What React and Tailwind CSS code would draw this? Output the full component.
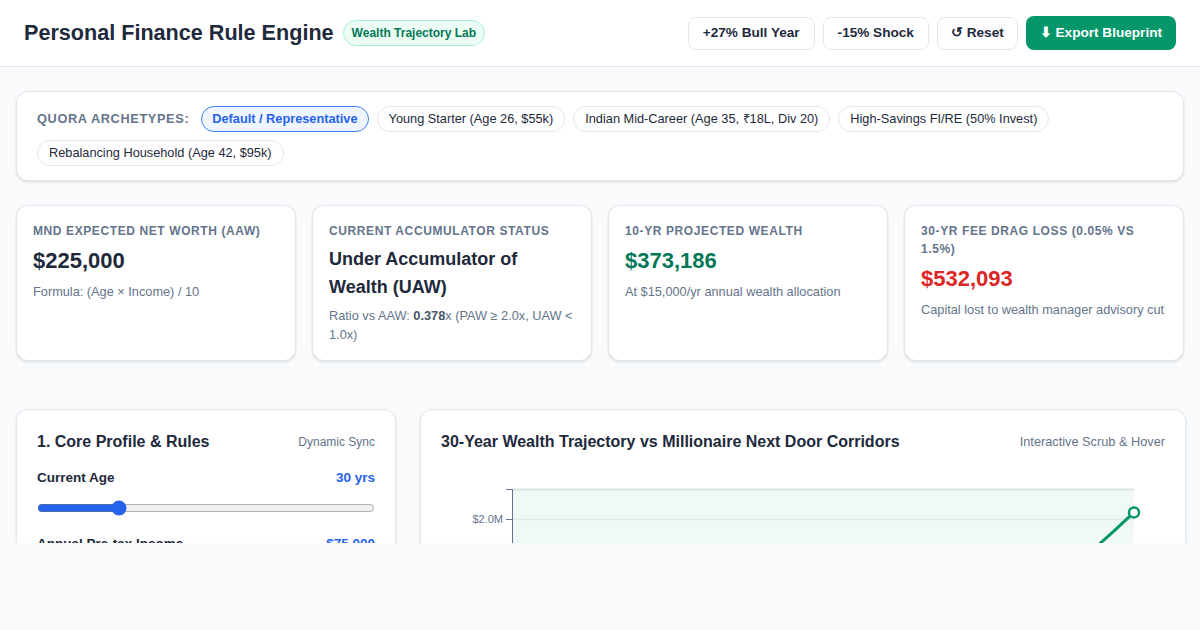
import React, { useState } from 'react';

const archetypes = [
  'Default / Representative',
  'Young Starter (Age 26, $55k)',
  'Indian Mid-Career (Age 35, ₹18L, Div 20)',
  'High-Savings FI/RE (50% Invest)',
  'Rebalancing Household (Age 42, $95k)',
];

function StatCard({ label, children, note }) {
  return (
    <div className="bg-white border border-[#e2e8f0] rounded-xl shadow-sm px-4 pt-4 pb-4">
      <div className="text-[12px] leading-[18px] font-bold uppercase tracking-wider text-[#64748b]">{label}</div>
      {children}
      <div className="mt-[5px] text-[12.75px] leading-[19px] text-[#64748b]">{note}</div>
    </div>
  );
}

function Chart() {
  // 30 yrs of growth, only the top corner is in view
  const x0 = 72, x1 = 693, base = 380, perM = 165;
  const pts = [];
  for (let t = 0; t <= 30; t++) {
    const g = (Math.pow(1.045, t) - 1) / (Math.pow(1.045, 30) - 1);
    const v = 0.05 + g * 1.99;
    pts.push([x0 + (t / 30) * (x1 - x0), base - v * perM]);
  }
  const d = pts.map((p, i) => `${i ? 'L' : 'M'}${p[0].toFixed(1)},${p[1].toFixed(1)}`).join(' ');
  const last = pts[pts.length - 1];
  return (
    <svg width="724" height="380" className="block">
      <rect x="72" y="20" width="621" height="360" fill="#f0f9f5" />
      <line x1="72" y1="20.5" x2="693" y2="20.5" stroke="#dbe3e2" strokeWidth="2" />
      <line x1="72" y1="50.5" x2="693" y2="50.5" stroke="#e2e8f0" strokeWidth="1.5" />
      <line x1="71.5" y1="20" x2="71.5" y2="380" stroke="#64748b" strokeWidth="1" />
      <line x1="65" y1="20.5" x2="71" y2="20.5" stroke="#64748b" strokeWidth="1" />
      <line x1="65" y1="50.5" x2="71" y2="50.5" stroke="#64748b" strokeWidth="1" />
      <text x="62" y="54" textAnchor="end" fontSize="11" fill="#64748b" fontFamily="'Liberation Sans', Arial, sans-serif">$2.0M</text>
      <path d={d} fill="none" stroke="#059669" strokeWidth="3" strokeLinejoin="round" />
      <circle cx={last[0]} cy={last[1]} r="5" fill="#fff" stroke="#059669" strokeWidth="2.5" />
    </svg>
  );
}

export default function App() {
  const [active, setActive] = useState(0);
  const [age, setAge] = useState(30);

  return (
    <div className="h-[630px] bg-[#f8fafc]" style={{ fontFamily: "'Liberation Sans', Arial, sans-serif" }}>
      <div className="h-[543px] overflow-hidden">
        <header className="h-[67px] bg-white border-b border-[#e2e8f0] px-6 flex items-center justify-between">
          <div className="flex items-center gap-[9px]">
            <h1 className="text-[21.6px] font-bold text-[#1e293b]">Personal Finance Rule Engine</h1>
            <span className="px-2 py-1 text-[12px] leading-4 font-bold text-[#047857] bg-[#ecfdf5] border border-[#a7f3d0] rounded-full">
              Wealth Trajectory Lab
            </span>
          </div>
          <div className="flex items-center gap-2">
            <button className="h-[33px] px-[14px] text-[13.6px] font-bold text-[#1e293b] bg-white border border-[#e2e8f0] rounded-lg">+27% Bull Year</button>
            <button className="h-[33px] px-[14px] text-[13.6px] font-bold text-[#1e293b] bg-white border border-[#e2e8f0] rounded-lg">-15% Shock</button>
            <button className="h-[33px] px-[13px] text-[13.6px] font-bold text-[#1e293b] bg-white border border-[#e2e8f0] rounded-lg">↺ Reset</button>
            <button className="h-[34px] px-[14px] text-[13.6px] font-bold text-white bg-[#059669] rounded-lg">⬇ Export Blueprint</button>
          </div>
        </header>

        <main className="px-4 pt-6">
          <div className="bg-white border border-[#e2e8f0] rounded-xl shadow-sm px-5 py-[14px] flex flex-wrap items-center gap-2">
            <span className="mr-1 text-[12.75px] font-bold uppercase tracking-wider text-[#64748b]">Quora Archetypes:</span>
            {archetypes.map((a, i) => (
              <button
                key={a}
                onClick={() => setActive(i)}
                className={
                  i === active
                    ? 'px-[10px] py-1 text-[12.75px] leading-4 font-bold text-[#2563eb] bg-[#eff6ff] border border-[#3b82f6] rounded-full'
                    : 'px-[11px] py-1 text-[12.75px] leading-4 text-[#1e293b] bg-white border border-[#e2e8f0] rounded-full'
                }
              >
                {a}
              </button>
            ))}
          </div>

          <div className="mt-6 grid grid-cols-4 gap-4">
            <StatCard label="MND Expected Net Worth (AAW)" note="Formula: (Age × Income) / 10">
              <div className="mt-[5px] text-[22px] leading-8 font-bold text-[#1e293b]">$225,000</div>
            </StatCard>
            <StatCard
              label="Current Accumulator Status"
              note={<>Ratio vs AAW: <b className="text-[#475569]">0.378</b>x (PAW ≥ 2.0x, UAW &lt; 1.0x)</>}
            >
              <div className="mt-[5px] text-lg leading-7 font-bold text-[#1e293b]">Under Accumulator of Wealth (UAW)</div>
            </StatCard>
            <StatCard label="10-Yr Projected Wealth" note="At $15,000/yr annual wealth allocation">
              <div className="mt-[5px] text-[22px] leading-8 font-bold text-[#047857]">$373,186</div>
            </StatCard>
            <StatCard label="30-Yr Fee Drag Loss (0.05% vs 1.5%)" note="Capital lost to wealth manager advisory cut">
              <div className="mt-[5px] text-[22px] leading-8 font-bold text-[#dc2626]">$532,093</div>
            </StatCard>
          </div>

          <div className="mt-12 grid grid-cols-[380px_1fr] gap-6">
            <div className="bg-white border border-[#e2e8f0] rounded-xl shadow-sm p-5">
              <div className="flex items-center justify-between">
                <h2 className="text-base leading-6 font-bold text-[#1e293b]">1. Core Profile &amp; Rules</h2>
                <span className="text-[12px] text-[#64748b]">Dynamic Sync</span>
              </div>
              <div className="mt-4 flex items-center justify-between text-[13.5px] leading-4 font-bold">
                <span className="text-[#1e293b]">Current Age</span>
                <span className="text-[#2563eb]">{age} yrs</span>
              </div>
              <input
                type="range"
                min="18"
                max="70"
                value={age}
                onChange={(e) => setAge(Number(e.target.value))}
                className="mt-[14px] w-full accent-[#2563eb] block"
              />
              <div className="mt-5 flex items-center justify-between text-[13.5px] leading-4 font-bold">
                <span className="text-[#1e293b]">Annual Pre-tax Income</span>
                <span className="text-[#2563eb]">$75,000</span>
              </div>
            </div>

            <div className="bg-white border border-[#e2e8f0] rounded-xl shadow-sm p-5">
              <div className="flex items-center justify-between">
                <h2 className="text-base leading-6 font-bold text-[#1e293b]">30-Year Wealth Trajectory vs Millionaire Next Door Corridors</h2>
                <span className="text-[12.75px] text-[#64748b]">Interactive Scrub &amp; Hover</span>
              </div>
              <div className="mt-[15px]">
                <Chart />
              </div>
            </div>
          </div>
        </main>
      </div>
    </div>
  );
}
